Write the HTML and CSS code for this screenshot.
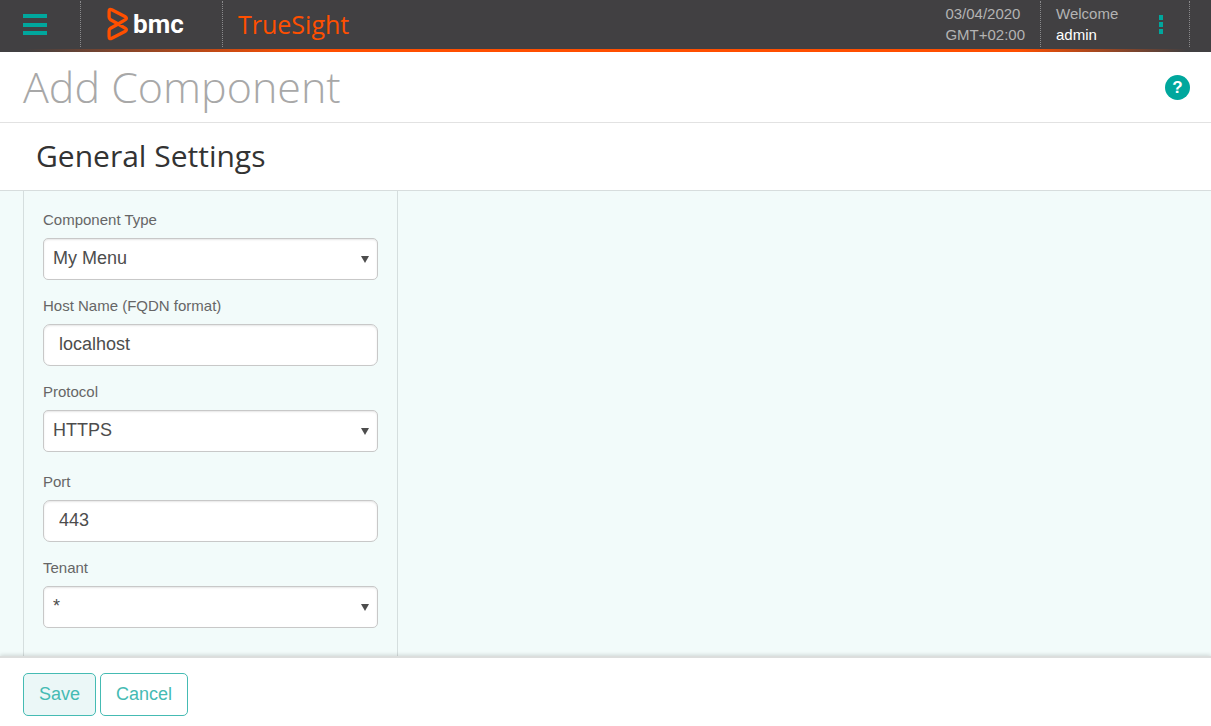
FILE: index.html
```html
<!DOCTYPE html>
<html lang="en">
<head>
<meta charset="utf-8">
<meta name="viewport" content="width=device-width, initial-scale=1">
<title>Add Component</title>
<link rel="stylesheet" href="styles.css">
</head>
<body class="page">
<header class="topbar">
  <div class="topbar-cell menu-cell">
    <button class="icon-button" type="button" aria-label="Menu">
      <svg width="24" height="21" viewBox="0 0 24 21" fill="#00a79d"><path d="M0 0h24v4H0zM0 9h24v4H0zM0 17h24v4H0z"/></svg>
    </button>
  </div>
  <div class="topbar-cell brand-cell">
    <svg class="brand-mark" width="22" height="34" viewBox="0 0 22 34" fill="none" stroke="#ff4f00" stroke-width="3.3" stroke-linejoin="round"><path d="M2.1 4.4Q2.1 1.4 4.8 2.8L18.4 9.8Q20.4 11.2 18.4 12.6L11.2 17 3.6 12.8Q2.1 11.8 2.1 10ZM2.1 29.6Q2.1 32.6 4.8 31.2L18.4 24.2Q20.4 22.8 18.4 21.4L11.2 17 3.6 21.2Q2.1 22.2 2.1 24Z"/></svg>
    <span class="brand-name">bmc</span>
  </div>
  <div class="product">TrueSight</div>
  <div class="topbar-cell date-cell"><span>03/04/2020</span><span>GMT+02:00</span></div>
  <div class="topbar-cell user-cell">
    <div class="user"><span>Welcome</span><span class="user-name">admin</span></div>
    <button class="icon-button" type="button" aria-label="More options">
      <svg width="5" height="19" viewBox="0 0 5 19" fill="#00a79d"><path d="M0 0h4v5H0zM0 7h4v5H0zM0 14h4v5H0z"/></svg>
    </button>
  </div>
</header>
<div class="title-bar">
  <h1 class="title">Add Component</h1>
  <button class="help" type="button" aria-label="Help">?</button>
</div>
<h2 class="section-title">General Settings</h2>
<main class="content">
  <form class="panel" id="component-form">
    <div class="field">
      <label class="label" for="type">Component Type</label>
      <div class="select-wrap"><select class="control select" id="type"><option>My Menu</option></select></div>
    </div>
    <div class="field">
      <label class="label" for="host">Host Name (FQDN format)</label>
      <input class="control input" id="host" type="text" value="localhost">
    </div>
    <div class="field field-spaced">
      <label class="label" for="protocol">Protocol</label>
      <div class="select-wrap"><select class="control select" id="protocol"><option>HTTPS</option></select></div>
    </div>
    <div class="field">
      <label class="label" for="port">Port</label>
      <input class="control input" id="port" type="text" value="443">
    </div>
    <div class="field">
      <label class="label" for="tenant">Tenant</label>
      <div class="select-wrap"><select class="control select" id="tenant"><option>*</option></select></div>
    </div>
  </form>
</main>
<footer class="footer">
  <button class="button button-primary" type="submit" form="component-form">Save</button>
  <button class="button" type="button">Cancel</button>
</footer>
</body>
</html>
```
FILE: styles.css
```css
* { box-sizing: border-box; }

.page {
  margin: 0;
  min-height: 100vh;
  display: flex;
  flex-direction: column;
  background: #fff;
  color: #4d4d4d;
  font-family: "Liberation Sans", Arial, sans-serif;
}

.topbar {
  display: flex;
  padding: 1px 21px 5px 0;
  height: 52px;
  background:
    linear-gradient(90deg, #414042 2%, #ff4f00 25%, #ff4f00 84%, #414042 98%) bottom / 100% 3px no-repeat,
    #414042;
}

.topbar-cell {
  display: flex;
  align-items: center;
  border-right: 1px dotted #8a8a8c;
}

.icon-button {
  display: flex;
  padding: 0;
  border: 0;
  background: none;
  cursor: pointer;
}

.menu-cell { width: 81px; padding-left: 23px; }

.brand-cell { width: 142px; padding-left: 26px; gap: 4px; }
.brand-mark { flex: none; }

.brand-name {
  color: #fff;
  font: bold 26px/32px Roboto, sans-serif;
}

.product {
  flex: 1;
  padding-left: 15px;
  color: #ff4f00;
  font: 25px/46px "Open Sans", sans-serif;
}

.date-cell,
.user {
  color: #b3b3b3;
  font-size: 15px;
  line-height: 21px;
}

.date-cell {
  flex-direction: column;
  align-items: flex-start;
  justify-content: center;
  padding-right: 15px;
}

.user-cell { width: 149px; padding: 0 25px 0 15px; justify-content: space-between; }
.user { display: flex; flex-direction: column; }
.user-name { color: #fff; }

.title-bar {
  display: flex;
  align-items: center;
  justify-content: space-between;
  height: 71px;
  padding: 0 21px 0 23px;
  border-bottom: 1px solid #e2e2e2;
}

.title {
  margin: 0;
  color: #a8a8a8;
  font: 300 43px/70px "Open Sans", sans-serif;
}

.help {
  width: 25px;
  height: 25px;
  padding: 0;
  border: 0;
  border-radius: 50%;
  background: #00a79d;
  color: #fff;
  font: bold 17px/25px "Liberation Sans", Arial, sans-serif;
}

.section-title {
  margin: 0;
  padding: 0 36px 2px;
  border-bottom: 1px solid #d7dddd;
  color: #333;
  font: 400 30px/65px "Open Sans", sans-serif;
}

.content {
  flex: 1;
  padding: 0 23px;
  background: #f2fbfa;
}

.panel {
  display: flex;
  flex-direction: column;
  gap: 16px;
  width: 375px;
  min-height: 100%;
  padding: 19px 19px 28px;
  border: 1px solid #d5dede;
  border-width: 0 1px;
}

.field { display: flex; flex-direction: column; gap: 8px; }
.field-spaced { margin-bottom: 4px; }

.label {
  color: #666;
  font-size: 15px;
  line-height: 20px;
}

.control {
  display: block;
  width: 100%;
  height: 42px;
  border: 1px solid #c8c8c8;
  background: #fff;
  box-shadow: inset 0 1px 2px #0000001a;
  color: #4d4d4d;
  font: 18px/20px "Liberation Sans", Arial, sans-serif;
}

.input { padding: 0 15px 2px; border-radius: 7px; }

.select {
  appearance: none;
  padding: 0 28px 2px 9px;
  border-radius: 5px;
}

.select-wrap { position: relative; }

.select-wrap::after {
  content: "";
  position: absolute;
  right: 9px;
  top: 18px;
  border: solid transparent;
  border-width: 7px 4px 0;
  border-top-color: #4d4d4d;
  pointer-events: none;
}

.footer {
  position: relative;
  display: flex;
  gap: 4px;
  padding: 15px 23px 10px;
  border-top: 2px solid #dcdedd;
  background: #fff;
  box-shadow: 0 -1px 4px #00000026;
}

.button {
  height: 43px;
  padding: 0 15px 2px;
  border: 1px solid #45bbb3;
  border-radius: 5px;
  background: #fff;
  color: #45bbb3;
  font: 18px/20px "Liberation Sans", Arial, sans-serif;
}

.button-primary { background: #ebf7f7; }
```
